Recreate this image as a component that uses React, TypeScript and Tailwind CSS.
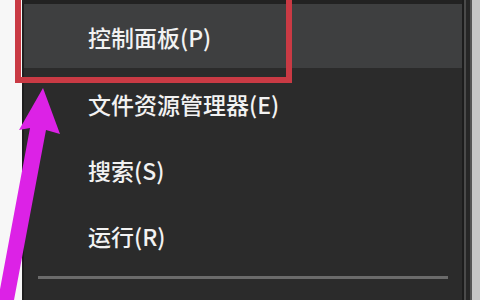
import React from "react";

const font = { fontFamily: '"Noto Sans CJK SC", "Noto Sans", sans-serif' };

function Item({ label, active }: { label: string; active?: boolean }) {
  return (
    <div
      className={`flex items-start pl-[64px] text-[23px] text-[#f2f2f2] font-medium ${
        active ? "bg-[#3e3f40] h-[64px] pt-[22px]" : "h-[66px] pt-[25px]"
      }`}
    >
      <span className="leading-none">{label}</span>
    </div>
  );
}

export default function App() {
  return (
    <div className="relative w-[480px] h-[300px] overflow-hidden bg-[#fafafa] flex" style={font}>
      <div className="w-[22px] bg-[#f7f7f7]" />
      <div className="flex-1 flex flex-col bg-[#2b2b2b] border-l-[2px] border-[#1e1e1e] border-t-[4px] border-t-[#222222]">
        <Item label="控制面板(P)" active />
        <Item label="文件资源管理器(E)" />
        <Item label="搜索(S)" />
        <Item label="运行(R)" />
        <div className="mt-[10px] mx-[14px] h-[3px] bg-[#6b6b6b]" />
      </div>
      <div className="w-[10px] flex">
        <div className="w-[2px] bg-[#1c1c1c]" />
        <div className="w-[2px] bg-[#4a4a4a]" />
        <div className="w-[4px] bg-[#262626]" />
        <div className="w-[2px] bg-[#555555]" />
      </div>
      <div className="w-[8px] bg-[#c6c6c6]" />

      <div className="absolute left-[15px] top-[-10px] w-[277px] h-[93px] border-[6px] border-[#c93a44]" />

      <svg className="absolute left-0 top-0" width="480" height="300" viewBox="0 0 480 300">
        <polygon
          points="43,88 60,134 46,130 14,300 -2,300 30,128 19,130"
          fill="#dc22e6"
        />
      </svg>
    </div>
  );
}
